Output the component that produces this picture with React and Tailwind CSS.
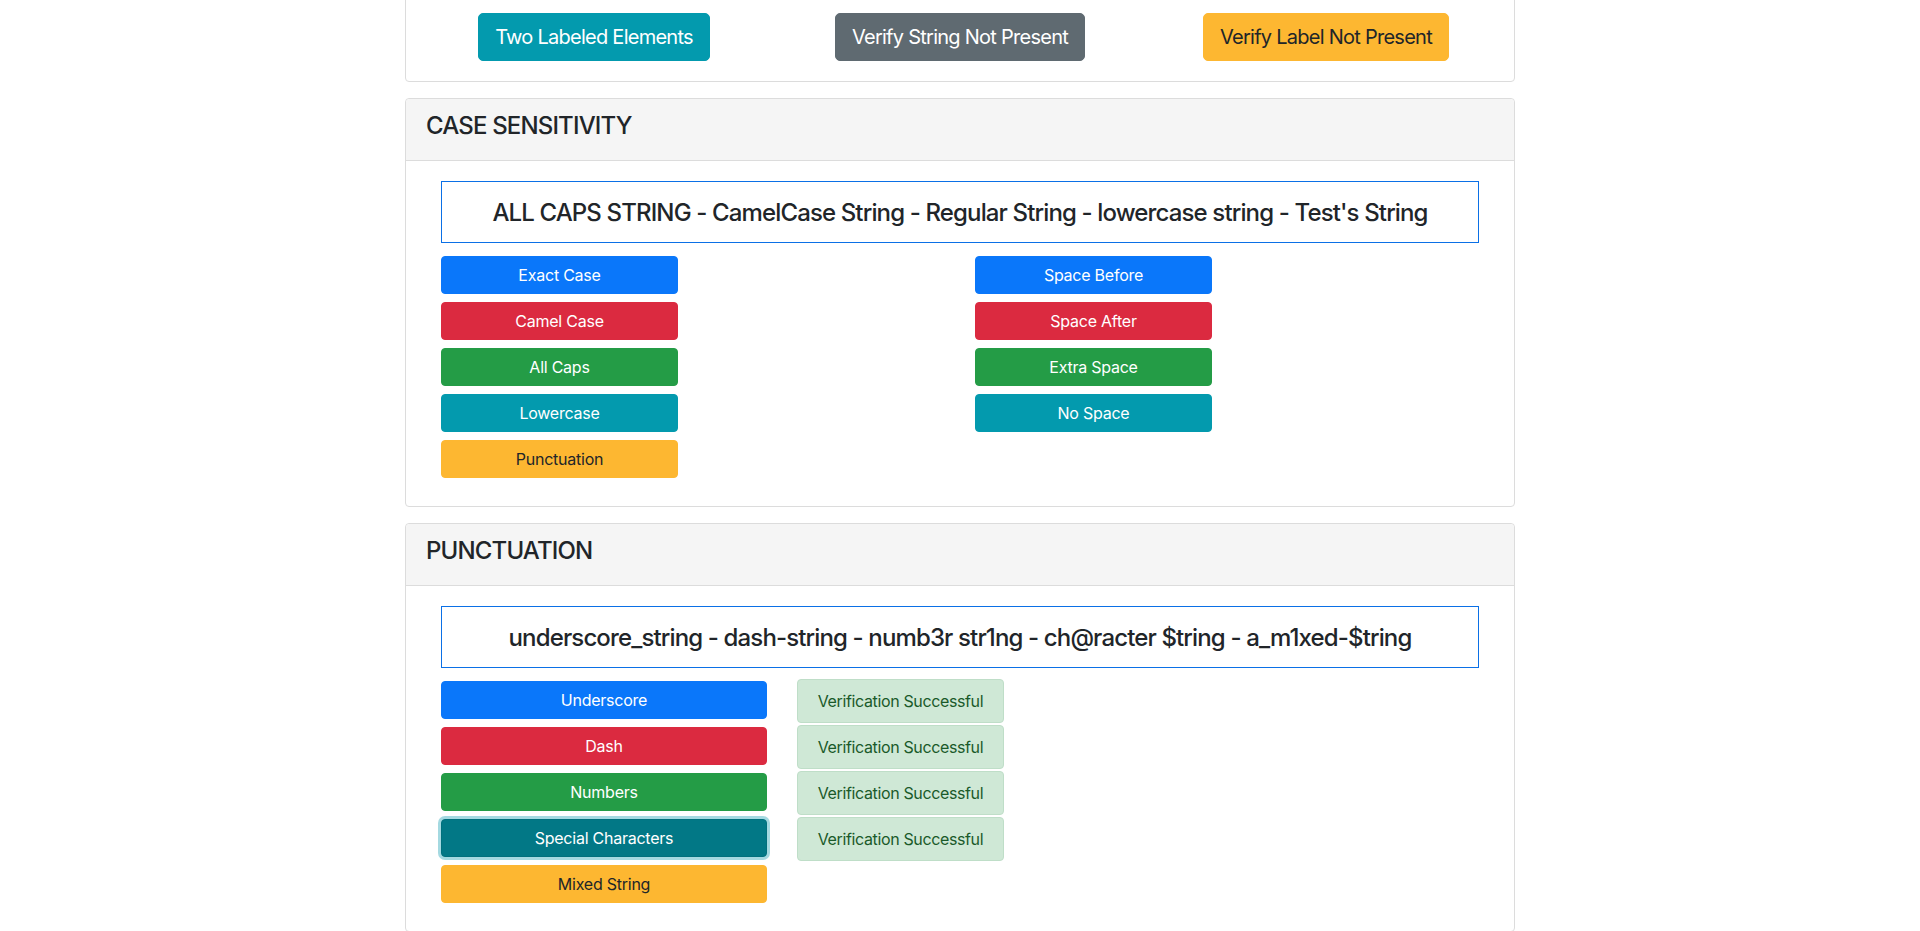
import React from 'react';

const FONT = { fontFamily: 'Inter, "Helvetica Neue", Arial, sans-serif' };

const caseLeft = [
    { label: 'Exact Case', cls: 'bg-[#0a77fa] border-[#0a77fa] text-white' },
    { label: 'Camel Case', cls: 'bg-[#db2a40] border-[#db2a40] text-white' },
    { label: 'All Caps', cls: 'bg-[#249c46] border-[#249c46] text-white' },
    { label: 'Lowercase', cls: 'bg-[#039aae] border-[#039aae] text-white' },
    { label: 'Punctuation', cls: 'bg-[#fdb731] border-[#fdb731] text-[#212529]' },
];

const caseRight = [
    { label: 'Space Before', cls: 'bg-[#0a77fa] border-[#0a77fa] text-white' },
    { label: 'Space After', cls: 'bg-[#db2a40] border-[#db2a40] text-white' },
    { label: 'Extra Space', cls: 'bg-[#249c46] border-[#249c46] text-white' },
    { label: 'No Space', cls: 'bg-[#039aae] border-[#039aae] text-white' },
];

const punctButtons = [
    { label: 'Underscore', cls: 'bg-[#0a77fa] border-[#0a77fa] text-white' },
    { label: 'Dash', cls: 'bg-[#db2a40] border-[#db2a40] text-white' },
    { label: 'Numbers', cls: 'bg-[#249c46] border-[#249c46] text-white' },
    { label: 'Special Characters', cls: 'bg-[#027886] border-[#01707d] text-white shadow-[0_0_0_3px_rgba(90,185,200,0.55)]' },
    { label: 'Mixed String', cls: 'bg-[#fdb731] border-[#fdb731] text-[#212529]' },
];

const Btn = ({ label, cls, width }) => (
    <button className={`${width} h-[38px] mb-2 border rounded-[4px] text-[16px] leading-[24px] tracking-[-0.015em] text-center ${cls}`}>
        {label}
    </button>
);

const CardHeader = ({ title }) => (
    <div className="bg-[#f5f5f5] border-b border-[#dcdcdc] px-5 pt-3 pb-5 rounded-t-[4px]">
        <h4 className="pt-[1px] h-[28.8px] text-[24px] leading-[28.8px] font-medium tracking-[-0.035em] text-[#212529]">{title}</h4>
    </div>
);

const StringBox = ({ text }) => (
    <div className="mx-[15px] h-[62px] border border-[#0b70e6] flex items-center justify-center">
        <h4 className="pt-[3px] text-[24px] leading-[28.8px] font-medium tracking-[-0.036em] text-[#212529]">{text}</h4>
    </div>
);

const LgBtn = ({ label, cls }) => (
    <div className="flex justify-center">
        <button className={`h-[48px] px-4 border rounded-[5px] text-[20px] leading-[30px] tracking-[-0.037em] ${cls}`}>
            {label}
        </button>
    </div>
);

export default function App() {
    return (
        <div className="min-h-screen bg-white overflow-hidden" style={FONT}>
            <div className="w-[1110px] mx-auto">
                {/* top card, scrolled partly off-screen */}
                <div className="-mt-2 border border-[#dcdcdc] rounded-[4px] p-5">
                    <div className="grid grid-cols-3 -mx-[15px]">
                        <LgBtn label="Two Labeled Elements" cls="border-[#039aae] bg-[#039aae] text-white" />
                        <LgBtn label="Verify String Not Present" cls="border-[#5f6a71] bg-[#5f6a71] text-white" />
                        <LgBtn label="Verify Label Not Present" cls="border-[#fdb731] bg-[#fdb731] text-[#212529]" />
                    </div>
                </div>

                {/* case sensitivity */}
                <div className="mt-4 border border-[#dcdcdc] rounded-[4px]">
                    <CardHeader title="CASE SENSITIVITY" />
                    <div className="p-5">
                        <StringBox text="ALL CAPS STRING - CamelCase String - Regular String - lowercase string - Test's String" />
                        <div className="mt-[13px] grid grid-cols-2">
                            <div className="px-[15px] flex flex-col items-start">
                                {caseLeft.map((b) => (
                                    <Btn key={b.label} {...b} width="w-[237px]" />
                                ))}
                            </div>
                            <div className="px-[15px] flex flex-col items-start">
                                {caseRight.map((b) => (
                                    <Btn key={b.label} {...b} width="w-[237px]" />
                                ))}
                            </div>
                        </div>
                    </div>
                </div>

                {/* punctuation */}
                <div className="mt-4 border border-[#dcdcdc] rounded-[4px]">
                    <CardHeader title="PUNCTUATION" />
                    <div className="p-5">
                        <StringBox text="underscore_string - dash-string - numb3r str1ng - ch@racter $tring - a_m1xed-$tring" />
                        <div className="mt-[13px] flex">
                            <div className="w-[356px] px-[15px] flex flex-col">
                                {punctButtons.map((b) => (
                                    <Btn key={b.label} {...b} width="w-full" />
                                ))}
                            </div>
                            <div className="px-[15px] -mt-[2px] flex flex-col">
                                {[0, 1, 2, 3].map((i) => (
                                    <div
                                        key={i}
                                        className="w-[207px] h-[44px] mb-[2px] bg-[#cfe8d6] border border-[#bfdec8] rounded-[4px] text-[#1a5a2a] text-[16px] tracking-[-0.023em] flex items-center justify-center"
                                    >
                                        Verification Successful
                                    </div>
                                ))}
                            </div>
                        </div>
                    </div>
                </div>
            </div>
        </div>
    );
}
